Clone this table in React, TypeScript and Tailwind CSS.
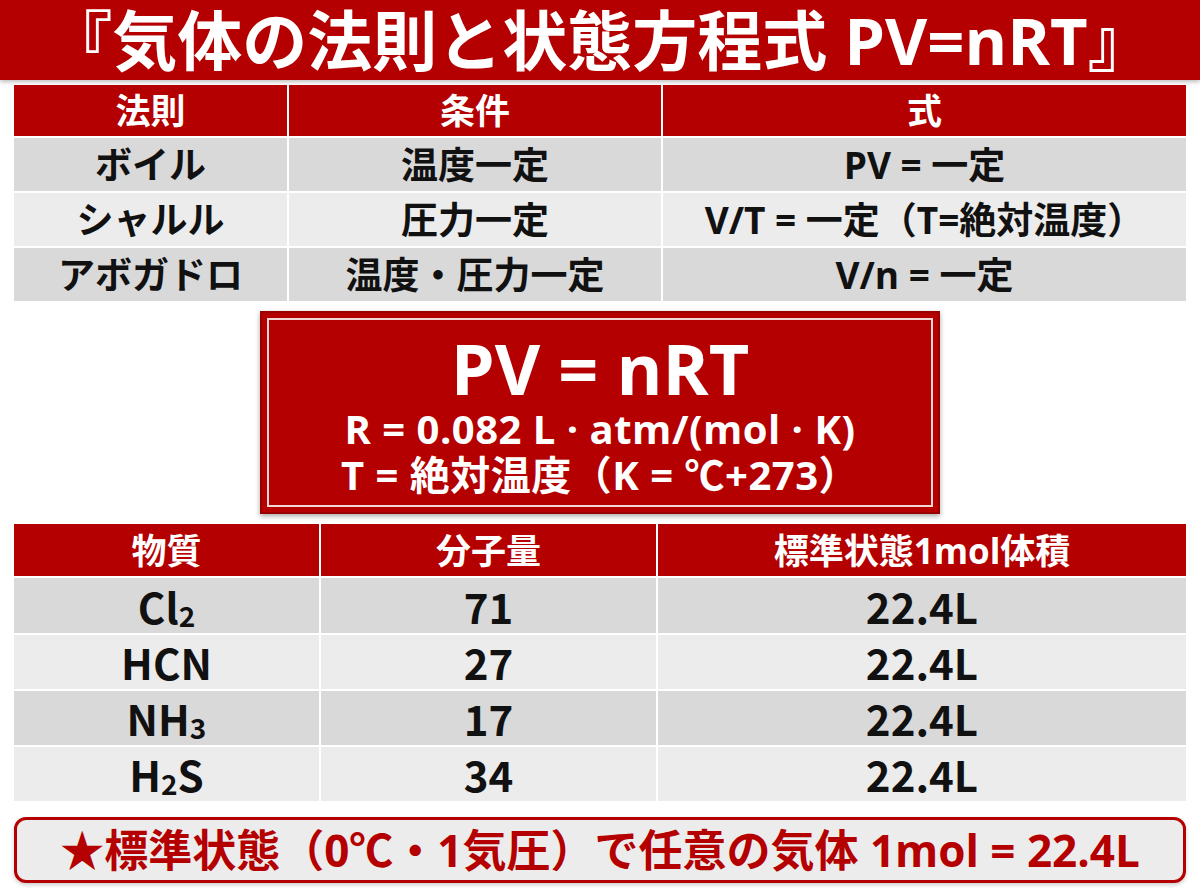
import React from 'react';

const font = { fontFamily: '"Open Sans", "Noto Sans CJK JP", sans-serif' };
const cjk = { fontFamily: '"Noto Sans CJK JP", sans-serif' };

const laws = [
  { name: 'ボイル', cond: '温度一定', eq: 'PV = 一定' },
  { name: 'シャルル', cond: '圧力一定', eq: 'V/T = 一定（T=絶対温度）' },
  { name: 'アボガドロ', cond: '温度・圧力一定', eq: 'V/n = 一定' },
];

function Sub({ children }: { children: React.ReactNode }) {
  return <span className="inline-block text-[28px] translate-y-[9px]">{children}</span>;
}

const gases: { f: React.ReactNode; m: string; v: string }[] = [
  { f: <>Cl<Sub>2</Sub></>, m: '71', v: '22.4L' },
  { f: 'HCN', m: '27', v: '22.4L' },
  { f: <>NH<Sub>3</Sub></>, m: '17', v: '22.4L' },
  { f: <>H<Sub>2</Sub>S</>, m: '34', v: '22.4L' },
];

function HeadCell({ children }: { children: React.ReactNode }) {
  return (
    <div className="bg-[#b40000] text-white text-[35px] font-bold flex items-center justify-center leading-none">
      {children}
    </div>
  );
}

function BodyCell({ children, dark, big }: { children: React.ReactNode; dark: boolean; big?: boolean }) {
  return (
    <div
      className={`${dark ? 'bg-[#d9d9d9]' : 'bg-[#ececec]'} text-[#111] ${big ? 'text-[42px]' : 'text-[37px]'} font-bold flex items-center justify-center leading-none`}
      style={big ? cjk : undefined}
    >
      {children}
    </div>
  );
}

export default function App() {
  return (
    <div className="w-[1200px] h-[896px] bg-white overflow-hidden" style={font}>
      <div className="h-[80px] bg-[#b40000] flex items-center justify-center shadow-[0_2px_4px_rgba(0,0,0,0.25)]">
        <h1 className="text-white text-[65px] font-bold leading-[80px] whitespace-nowrap">
          『気体の法則と状態方程式 PV=nRT』
        </h1>
      </div>

      <div className="mx-[14px] mt-[5px] grid grid-cols-[273px_372px_1fr] gap-[2px] grid-rows-[51px_53px_53px_53px]">
        <HeadCell>法則</HeadCell>
        <HeadCell>条件</HeadCell>
        <HeadCell>式</HeadCell>
        {laws.map((r, i) => (
          <React.Fragment key={r.name}>
            <BodyCell dark={i % 2 === 0}>{r.name}</BodyCell>
            <BodyCell dark={i % 2 === 0}>{r.cond}</BodyCell>
            <BodyCell dark={i % 2 === 0}>{r.eq}</BodyCell>
          </React.Fragment>
        ))}
      </div>

      <div className="mx-auto mt-[10px] w-[680px] h-[203px] bg-[#b40000] border-2 border-[#9a0000] p-[5px] shadow-[0_2px_5px_rgba(0,0,0,0.35)]">
        <div className="h-full border-2 border-[#f3d6d6] flex flex-col items-center justify-center text-white">
          <div className="text-[70px] font-bold leading-[70px] mt-[4px]">PV = nRT</div>
          <div className="text-[40px] font-bold leading-[44px] mt-[4px] tracking-[0.5px]">R = 0.082 L · atm/(mol · K)</div>
          <div className="text-[40px] font-bold leading-[44px] mt-[2px] tracking-[0.5px]">T = 絶対温度（K = ℃+273）</div>
        </div>
      </div>

      <div className="mx-[14px] mt-[10px] grid grid-cols-[305px_335px_1fr] gap-[2px] grid-rows-[52px_55px_54px_54px_54px]">
        <HeadCell>物質</HeadCell>
        <HeadCell>分子量</HeadCell>
        <HeadCell>標準状態1mol体積</HeadCell>
        {gases.map((g, i) => (
          <React.Fragment key={i}>
            <BodyCell big dark={i % 2 === 0}>{g.f}</BodyCell>
            <BodyCell big dark={i % 2 === 0}>{g.m}</BodyCell>
            <BodyCell big dark={i % 2 === 0}>{g.v}</BodyCell>
          </React.Fragment>
        ))}
      </div>

      <div className="mx-[14px] mt-[16px] h-[66px] rounded-[12px] border-[3px] border-[#b40000] bg-[#ececec] flex items-center justify-center shadow-[0_2px_4px_rgba(0,0,0,0.2)]">
        <span className="text-[#b40000] text-[44px] font-bold leading-[60px] whitespace-nowrap">
          ★標準状態（0℃・1気圧）で任意の気体 1mol = 22.4L
        </span>
      </div>
    </div>
  );
}
